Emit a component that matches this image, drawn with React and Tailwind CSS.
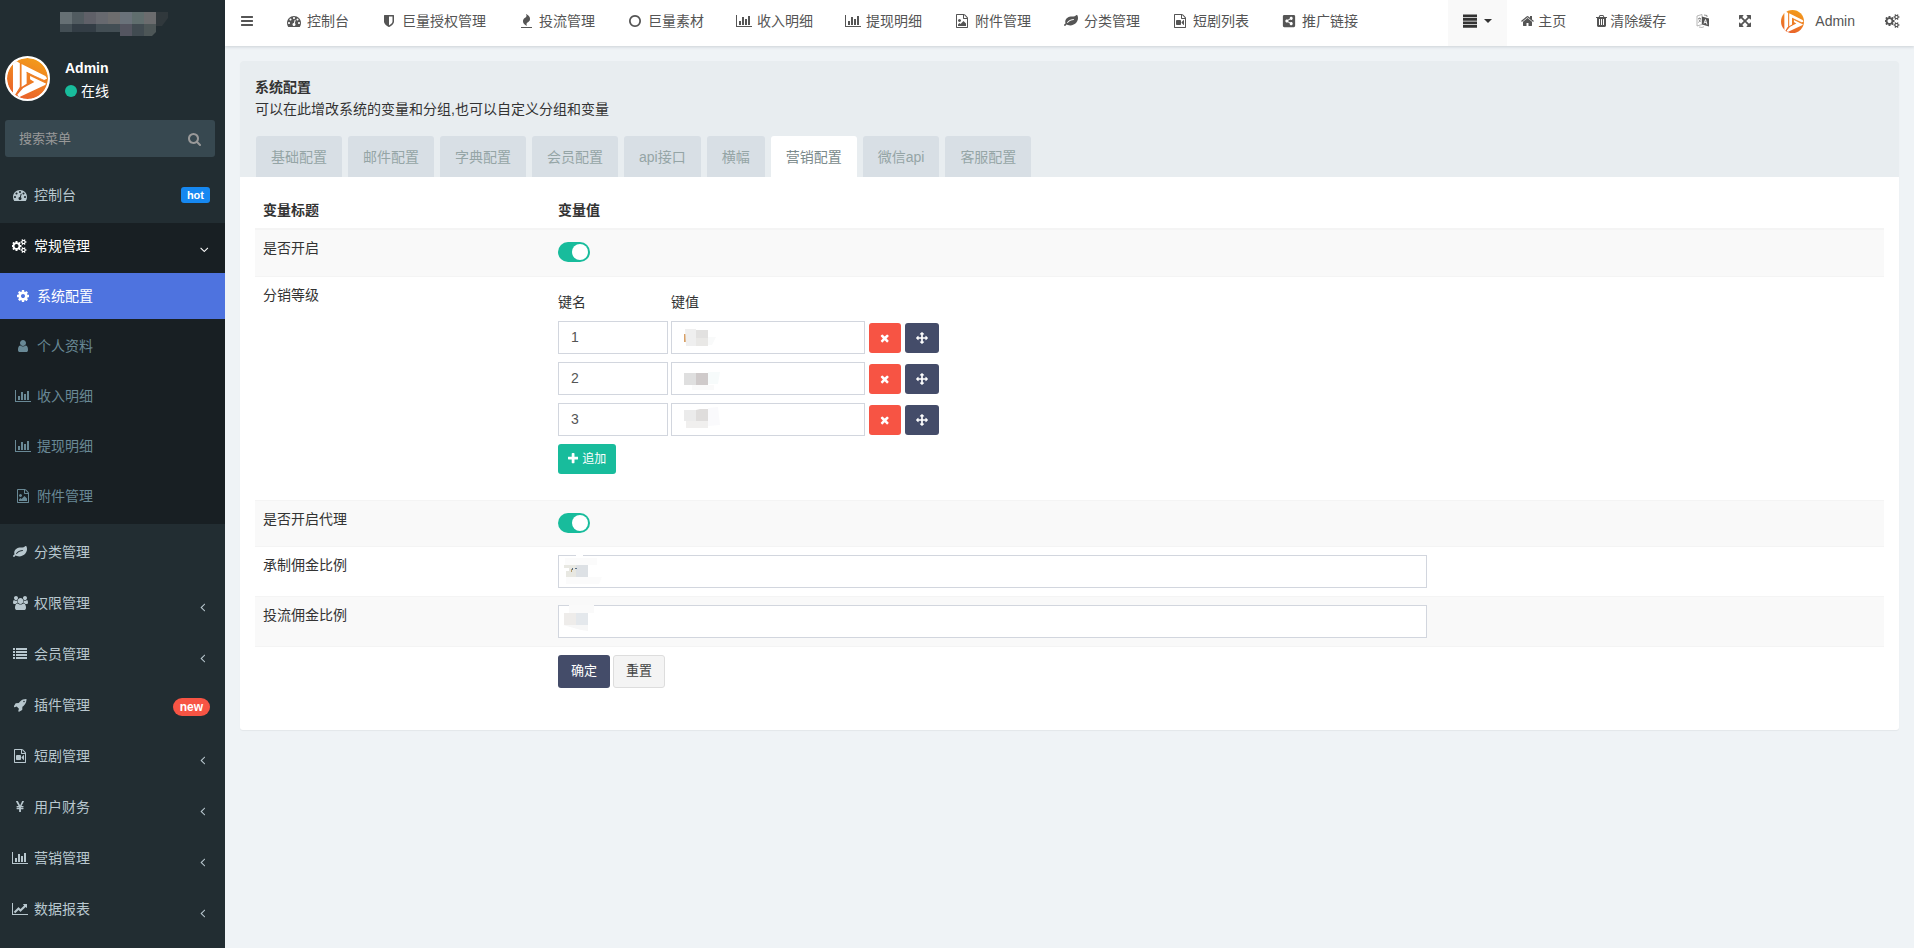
import { useState } from 'react'
import { FaShareAltSquare } from 'react-icons/fa'

/* ── Icon shapes, on a 1792-unit tall grid ── */
const FILE_FRAME =
  'M1468 380q28 28 48 76t20 88v1152q0 40-28 68t-68 28h-1344q-40 0-68-28t-28-68v-1600q0-40 28-68t68-28h896q40 0 88 20t76 48zm-444-244v376h376q-10-29-22-41l-313-313q-12-12-41-22zm384 1528v-1024h-416q-40 0-68-28t-28-68v-416h-768v1536h1280z'

const ICONS = {
  bars: ['128 0 1536 1792', 'M1664 1344v128q0 26-19 45t-45 19h-1408q-26 0-45-19t-19-45v-128q0-26 19-45t45-19h1408q26 0 45 19t19 45zm0-512v128q0 26-19 45t-45 19h-1408q-26 0-45-19t-19-45v-128q0-26 19-45t45-19h1408q26 0 45 19t19 45zm0-512v128q0 26-19 45t-45 19h-1408q-26 0-45-19t-19-45v-128q0-26 19-45t45-19h1408q26 0 45 19t19 45z'],
  dashboard: ['0 0 1792 1792', 'M384 1152q0-53-37.5-90.5t-90.5-37.5-90.5 37.5-37.5 90.5 37.5 90.5 90.5 37.5 90.5-37.5 37.5-90.5zm192-448q0-53-37.5-90.5t-90.5-37.5-90.5 37.5-37.5 90.5 37.5 90.5 90.5 37.5 90.5-37.5 37.5-90.5zm428 481l101-382q6-26-7.5-48.5t-38.5-29.5-48 6.5-30 39.5l-101 382q-60 5-107 43.5t-63 98.5q-20 77 20 146t117 89 146-20 89-117q16-60-6-117t-72-91zm660-33q0-53-37.5-90.5t-90.5-37.5-90.5 37.5-37.5 90.5 37.5 90.5 90.5 37.5 90.5-37.5 37.5-90.5zm-640-640q0-53-37.5-90.5t-90.5-37.5-90.5 37.5-37.5 90.5 37.5 90.5 90.5 37.5 90.5-37.5 37.5-90.5zm448 192q0-53-37.5-90.5t-90.5-37.5-90.5 37.5-37.5 90.5 37.5 90.5 90.5 37.5 90.5-37.5 37.5-90.5zm320 448q0 261-141 483-19 29-54 29h-1402q-35 0-54-29-141-221-141-483 0-182 71-348t191-286 286-191 348-71 348 71 286 191 191 286 71 348z'],
  cog: ['128 0 1536 1792', 'M1152 896q0-106-75-181t-181-75-181 75-75 181 75 181 181 75 181-75 75-181zm512-109v222q0 12-8 23t-20 13l-185 28q-19 54-39 91 35 50 107 138 10 12 10 25t-9 23q-27 37-99 108t-94 71q-12 0-26-9l-138-108q-44 23-91 38-16 136-29 186-7 28-36 28h-222q-14 0-24.5-8.5t-11.5-21.5l-28-184q-49-16-90-37l-141 107q-10 9-25 9-14 0-25-11-126-114-165-168-7-10-7-23 0-12 8-23 15-21 51-66.5t54-70.5q-27-50-41-99l-183-27q-13-2-21-12.5t-8-23.5v-222q0-12 8-23t19-13l186-28q14-46 39-92-40-57-107-138-10-12-10-24 0-10 9-23 26-36 98.5-107.5t94.5-71.5q13 0 26 10l138 107q44-23 91-38 16-136 29-186 7-28 36-28h222q14 0 24.5 8.5t11.5 21.5l28 184q49 16 90 37l142-107q9-9 24-9 13 0 25 10 129 119 165 170 7 8 7 22 0 12-8 23-15 21-51 66.5t-54 70.5q26 50 41 98l183 28q13 2 21 12.5t8 23.5z'],
  cogs: ['0 0 1920 1792', 'M832 896q0-106-75-181t-181-75-181 75-75 181 75 181 181 75 181-75 75-181zm768 512q0-52-38-90t-90-38-90 38-38 90q0 53 37.5 90.5t90.5 37.5 90.5-37.5 37.5-90.5zm0-1024q0-52-38-90t-90-38-90 38-38 90q0 53 37.5 90.5t90.5 37.5 90.5-37.5 37.5-90.5zm-384 421v185q0 10-7 19.5t-16 10.5l-155 24q-11 35-32 76 34 48 90 115 7 11 7 20 0 12-7 19-23 30-82.5 89.5t-78.5 59.5q-11 0-21-7l-115-90q-37 19-77 31-11 108-23 155-7 24-30 24h-186q-11 0-20-7.5t-10-17.5l-23-153q-34-10-75-31l-118 89q-7 7-20 7-11 0-21-8-144-133-144-160 0-9 7-19 10-14 41-53t47-61q-23-44-35-82l-152-24q-10-1-17-9.5t-7-19.5v-185q0-10 7-19.5t16-10.5l155-24q11-35 32-76-34-48-90-115-7-11-7-20 0-12 7-20 22-30 82-89t79-59q11 0 21 7l115 90q34-18 77-32 11-108 23-154 7-24 30-24h186q11 0 20 7.5t10 17.5l23 153q34 10 75 31l118-89q8-7 20-7 11 0 21 8 144 133 144 160 0 8-7 19-12 16-42 54t-45 60q23 48 34 82l152 23q10 2 17 10.5t7 19.5zm640 533v140q0 16-149 31-12 27-30 52 51 113 51 138 0 4-4 7-122 71-124 71-8 0-46-47t-52-68q-20 2-30 2t-30-2q-14 21-52 68t-46 47q-2 0-124-71-4-3-4-7 0-25 51-138-18-25-30-52-149-15-149-31v-140q0-16 149-31 13-29 30-52-51-113-51-138 0-4 4-7 4-2 35-20t59-34 30-16q8 0 46 46.5t52 67.5q20-2 30-2t30 2q51-71 92-112l6-2q4 0 124 70 4 3 4 7 0 25-51 138 17 23 30 52 149 15 149 31zm0-1024v140q0 16-149 31-12 27-30 52 51 113 51 138 0 4-4 7-122 71-124 71-8 0-46-47t-52-68q-20 2-30 2t-30-2q-14 21-52 68t-46 47q-2 0-124-71-4-3-4-7 0-25 51-138-18-25-30-52-149-15-149-31v-140q0-16 149-31 13-29 30-52-51-113-51-138 0-4 4-7 4-2 35-20t59-34 30-16q8 0 46 46.5t52 67.5q20-2 30-2t30 2q51-71 92-112l6-2q4 0 124 70 4 3 4 7 0 25-51 138 17 23 30 52 149 15 149 31z'],
  leaf: ['0 0 1792 1792', 'M1280 704q0-26-19-45t-45-19q-172 0-318 49.5t-259.5 134-235.5 219.5q-19 21-19 45 0 26 19 45t45 19q24 0 45-19 27-24 74-71t67-66q137-124 268.5-176t313.5-52q26 0 45-19t19-45zm512-198q0 95-20 193-46 224-184.5 383t-357.5 268q-214 108-438 108-148 0-286-47-15-5-88-42t-96-37q-16 0-39.5 32t-45 70-52.5 70-60 32q-43 0-63.5-17.5t-45.5-59.5q-2-4-6-11t-5.5-10-3-9.5-1.5-13.5q0-35 31-73.5t68-65.5 68-56 31-48q0-4-14-38t-16-44q-9-51-9-104 0-115 43.5-220t119-184.5 170.5-139 204-95.5q55-18 145-25.5t179.5-9 178.5-6 163.5-24 113.5-56.5l29.5-29.5 29.5-28 27-20 36.5-16 43.5-4.5q39 0 70.5 46t47.5 112 24 124 8 96z'],
  barChart: ['0 0 2048 1792', 'M640 896v512h-256v-512h256zm384-512v1024h-256v-1024h256zm1024 1152v128h-2048v-1536h128v1408h1920zm-640-896v768h-256v-768h256zm384-384v1152h-256v-1152h256z'],
  lineChart: ['0 0 2048 1792', 'M2048 1536v128h-2048v-1536h128v1408h1920zm-128-1248v435q0 21-19.5 29.5t-35.5-7.5l-121-121-633 633q-10 10-23 10t-23-10l-233-233-416 416-192-192 585-585q10-10 23-10t23 10l233 233 464-464-121-121q-16-16-7.5-35.5t29.5-19.5h435q14 0 23 9t9 23z'],
  fileImage: ['0 0 1536 1792', FILE_FRAME + 'm-128-448v320h-1024v-192l192-192 128 128 384-384zm-832-192q-80 0-136-56t-56-136 56-136 136-56 136 56 56 136-56 136-136 56z'],
  fileVideo: ['0 0 1536 1792', FILE_FRAME + 'M768 768q52 0 90 38t38 90v384q0 52-38 90t-90 38h-384q-52 0-90-38t-38-90v-384q0-52 38-90t90-38h384zm492 2q20 8 20 30v576q0 22-20 30-8 2-12 2-14 0-23-9l-265-266v-90l265-266q9-9 23-9 4 0 12 2z'],
  shield: ['256 0 1280 1792', 'M1344 960v-640h-448v1137q119-63 213-137 235-184 235-360zm192-768v768q0 86-33.5 170.5t-83 150-118 127.5-126.5 103-121 77.5-89.5 49.5-42.5 20q-12 6-26 6t-26-6q-16-7-42.5-20t-89.5-49.5-121-77.5-126.5-103-118-127.5-83-150-33.5-170.5v-768q0-26 19-45t45-19h1152q26 0 45 19t19 45z'],
  fire: ['192 0 1408 1792', 'M1600 1696v64q0 13-9.5 22.5t-22.5 9.5h-1344q-13 0-22.5-9.5t-9.5-22.5v-64q0-13 9.5-22.5t22.5-9.5h1344q13 0 22.5 9.5t9.5 22.5zm-256-1056q0 78-24.5 144t-64 112.5-87.5 88-96 77.5-87.5 72-64 81.5-24.5 96.5q0 96 67 224l-4-1 1 1q-90-41-160-83t-138.5-100-113.5-122.5-72.5-150.5-27.5-184q0-78 24.5-144t64-112.5 87.5-88 96-77.5 87.5-72 64-81.5 24.5-96.5q0-94-66-224l3 1-1-1q90 41 160 83t138.5 100 113.5 122.5 72.5 150.5 27.5 184z'],
  circle: ['128 0 1536 1792', 'M896 352q-148 0-273 73t-198 198-73 273 73 273 198 198 273 73 273-73 198-198 73-273-73-273-198-198-273-73zm768 544q0 209-103 385.5t-279.5 279.5-385.5 103-385.5-103-279.5-279.5-103-385.5 103-385.5 279.5-279.5 385.5-103 385.5 103 279.5 279.5 103 385.5z'],
  user: ['256 0 1280 1792', 'M1536 1399q0 109-62.5 187t-150.5 78h-854q-88 0-150.5-78t-62.5-187q0-85 8.5-160.5t31.5-152 58.5-131 94-89 134.5-34.5q131 128 313 128t313-128q76 0 134.5 34.5t94 89 58.5 131 31.5 152 8.500 160.500zm-256-887q0 159-112.5 271.5t-271.5 112.5-271.5-112.5-112.5-271.5 112.5-271.5 271.5-112.5 271.5 112.5 112.5 271.5z'],
  users: ['0 0 1920 1792', 'M593 896q-162 5-265 128h-134q-82 0-138-40.5t-56-118.5q0-353 124-353 6 0 43.5 21t97.5 42.5 119 21.5q67 0 133-23-5 37-5 66 0 159 81 256zm1071 637q0 120-73 189.5t-194 69.5h-874q-121 0-194-69.5t-73-189.5q0-53 3.5-103.5t14-109 26.5-108.5 43-97.5 62-81 85.5-53.5 111.5-20q10 0 43 21.5t73 48 107 48 135 21.5 135-21.5 107-48 73-48 43-21.5q61 0 111.5 20t85.5 53.5 62 81 43 97.5 26.5 108.5 14 109 3.5 103.5zm-1024-1277q0 106-75 181t-181 75-181-75-75-181 75-181 181-75 181 75 75 181zm704 384q0 159-112.5 271.5t-271.5 112.5-271.5-112.5-112.5-271.5 112.5-271.5 271.5-112.5 271.5 112.5 112.5 271.5zm576 225q0 78-56 118.5t-138 40.5h-134q-103-123-265-128 81-97 81-256 0-29-5-66 66 23 133 23 59 0 119-21.5t97.5-42.5 43.5-21q124 0 124 353zm-128-609q0 106-75 181t-181 75-181-75-75-181 75-181 181-75 181 75 75 181z'],
  list: ['0 0 1792 1792', 'M0 1280h256v256h-256zM0 896h256v256h-256zM0 512h256v256h-256zM0 128h256v256h-256zM384 1280h1408v256h-1408zM384 896h1408v256h-1408zM384 512h1408v256h-1408zM384 128h1408v256h-1408z'],
  alignJustify: ['0 0 1792 1792', 'M0 1408h1792v352h-1792zM0 960h1792v352h-1792zM0 512h1792v352h-1792zM0 64h1792v352h-1792z'],
  rocket: ['64 0 1664 1792', 'M1440 448q0-40-28-68t-68-28-68 28-28 68 28 68 68 28 68-28 28-68zm224-288q0 249-75.5 430.5t-253.5 360.5q-81 80-195 176l-20 379q-2 16-16 26l-384 224q-7 4-16 4-12 0-23-9l-64-64q-13-14-8-32l85-276-281-281-276 85q-3 1-9 1-14 0-23-9l-64-64q-17-19-5-39l224-384q10-14 26-16l379-20q96-114 176-195 188-187 358-258t431-71q14 0 24 9.5t10 22.5z'],
  yen: ['384 0 1024 1792', 'M985.5 1536h-172q-13 0-22.5-9t-9.5-23v-330h-288q-13 0-22.5-9t-9.5-23v-103q0-13 9.5-22.5t22.5-9.5h288v-85h-288q-13 0-22.5-9t-9.5-23v-104q0-13 9.5-22.5t22.5-9.5h214l-321-578q-8-16 0-32 10-16 28-16h194q19 0 29 18l215 425q19 38 56 125 10-24 30.5-68t27.5-61l191-420q8-19 29-19h191q17 0 27 16 9 14 1 31l-313 579h215q13 0 22.5 9.5t9.5 22.5v104q0 14-9.5 23t-22.5 9h-290v85h290q13 0 22.5 9.5t9.5 22.5v103q0 14-9.5 23t-22.5 9h-290v330q0 13-9.5 22.5t-22.5 9.5z'],
  search: ['64 0 1664 1792', 'M1216 832q0-185-131.5-316.5t-316.5-131.5-316.5 131.5-131.5 316.5 131.5 316.5 316.5 131.5 316.5-131.5 131.5-316.5zm512 832q0 52-38 90t-90 38q-54 0-90-38l-343-342q-179 124-399 124-143 0-273.5-55.5t-225-150-150-225-55.5-273.5 55.5-273.5 150-225 225-150 273.5-55.5 273.5 55.5 225 150 150 225 55.5 273.5q0 220-124 399l343 343q37 37 37 90z'],
  home: ['64 0 1664 1792', 'M1472 992v480q0 26-19 45t-45 19h-384v-384h-256v384h-384q-26 0-45-19t-19-45v-480q0-1 .5-3t.5-3l575-474 575 474q1 2 1 6zm223-69l-62 74q-8 9-21 11h-3q-13 0-21-7l-692-577-692 577q-12 8-24 7-13-2-21-11l-62-74q-8-10-7-23.5t11-21.5l719-599q32-26 76-26t76 26l244 204v-195q0-14 9-23t23-9h192q14 0 23 9t9 23v408l219 182q10 8 11 21.5t-7 23.5z'],
  trash: ['192 0 1408 1792', 'M704 1376v-704q0-14-9-23t-23-9h-64q-14 0-23 9t-9 23v704q0 14 9 23t23 9h64q14 0 23-9t9-23zm256 0v-704q0-14-9-23t-23-9h-64q-14 0-23 9t-9 23v704q0 14 9 23t23 9h64q14 0 23-9t9-23zm256 0v-704q0-14-9-23t-23-9h-64q-14 0-23 9t-9 23v704q0 14 9 23t23 9h64q14 0 23-9t9-23zm-544-992h448l-48-117q-7-9-17-11h-317q-10 2-17 11zm928 32v64q0 14-9 23t-23 9h-96v948q0 83-47 143.5t-113 60.5h-832q-66 0-113-58.5t-47-141.5v-952h-96q-14 0-23-9t-9-23v-64q0-14 9-23t23-9h309l70-167q15-37 54-63t79-26h320q40 0 79 26t54 63l70 167h309q14 0 23 9t9 23z'],
  expand: ['128 0 1536 1792', 'M1411 541l-355 355 355 355 144-144q29-31 70-14 39 17 39 59v448q0 26-19 45t-45 19h-448q-42 0-59-40-17-39 14-69l144-144-355-355-355 355 144 144q31 30 14 69-17 40-59 40h-448q-26 0-45-19t-19-45v-448q0-42 40-59 39-17 69 14l144 144 355-355-355-355-144 144q-19 19-45 19-12 0-24-5-40-17-40-59v-448q0-26 19-45t45-19h448q42 0 59 40 17 39-14 69l-144 144 355 355 355-355-144-144q-31-30-14-69 17-40 59-40h448q26 0 45 19t19 45v448q0 42-39 59-13 5-25 5-26 0-45-19z'],
  arrows: ['0 0 1792 1792', 'M1792 896q0 26-19 45l-256 256q-19 19-45 19t-45-19-19-45v-128h-384v384h128q26 0 45 19t19 45-19 45l-256 256q-19 19-45 19t-45-19l-256-256q-19-19-19-45t19-45 45-19h128v-384h-384v128q0 26-19 45t-45 19-45-19l-256-256q-19-19-19-45t19-45l256-256q19-19 45-19t45 19 19 45v128h384v-384h-128q-26 0-45-19t-19-45 19-45l256-256q19-19 45-19t45 19l256 256q19 19 19 45t-19 45-45 19h-128v384h384v-128q0-26 19-45t45-19 45 19l256 256q19 19 19 45z'],
  times: ['192 0 1408 1792', 'M1490 1322q0 40-28 68l-136 136q-28 28-68 28t-68-28l-294-294-294 294q-28 28-68 28t-68-28l-136-136q-28-28-28-68t28-68l294-294-294-294q-28-28-28-68t28-68l136-136q28-28 68-28t68 28l294 294 294-294q28-28 68-28t68 28l136 136q28 28 28 68t-28 68l-294 294 294 294q28 28 28 68z'],
  plus: ['192 0 1408 1792', 'M1600 736v192q0 40-28 68t-68 28h-416v416q0 40-28 68t-68 28h-192q-40 0-68-28t-28-68v-416h-416q-40 0-68-28t-28-68v-192q0-40 28-68t68-28h416v-416q0-40 28-68t68-28h192q40 0 68 28t28 68v416h416q40 0 68 28t28 68z'],
  angleLeft: ['544 0 704 1792', 'M1203 544q0 13-10 23l-393 393 393 393q10 10 10 23t-10 23l-50 50q-10 10-23 10t-23-10l-466-466q-10-10-10-23t10-23l466-466q10-10 23-10t23 10l50 50q10 10 10 23z'],
}

function Icon({ name, className = 'h-[14px]' }) {
  if (name === 'share') return <FaShareAltSquare className={`${className} w-auto`} />
  const [viewBox, d] = ICONS[name]
  return (
    <svg viewBox={viewBox} className={`${className} w-auto shrink-0 fill-current`} aria-hidden="true">
      <path d={d} />
    </svg>
  )
}

function Logo({ className }) {
  return (
    <svg viewBox="0 0 48 48" className={className} aria-hidden="true">
      <defs>
        <linearGradient id="disc" x1="0.7" y1="0" x2="0.3" y2="1">
          <stop offset="0" stopColor="#f39c1a" />
          <stop offset="1" stopColor="#e9602c" />
        </linearGradient>
      </defs>
      <circle cx="24" cy="24" r="24" fill="url(#disc)" />
      <path d="M7 5l3-2 5 3v28L9 44l-2-2z" fill="#fff" />
      <path d="M17 7l28 14 2 3-4 2-11-5-9-5v14l-6 4z" fill="#fff" />
      <path d="M12 43l7-8 13-7-5-3v-4l19 9-2 2-30 14z" fill="#fff" />
      <path d="M16 6v28l-6 10M23 17l22 10" stroke="#ee7d27" strokeWidth="1" fill="none" />
    </svg>
  )
}

function LanguageIcon() {
  return (
    <svg viewBox="0 0 14 14" className="h-[14px] w-[14px]" aria-hidden="true">
      <path d="M1 2l5-1.500v10L1 12z" fill="#fff" stroke="#999" strokeWidth="0.700" />
      <path d="M2 4.500h3M3.500 3.500v1M2.300 8.500c1.200-.8 2-2 2.200-4M2.600 5.500l2 2.500" stroke="#777" strokeWidth="0.700" fill="none" />
      <path d="M6 2.500l7 2v8l-7-2z" fill="#555" />
      <path d="M8 9.500l1.500-4 1.500 5M8.500 8.200l2 .5" stroke="#fff" strokeWidth="0.900" fill="none" />
      <path d="M8 1l3 .5v1.500" stroke="#777" strokeWidth="0.800" fill="none" />
      <path d="M3 13l3 .5 2-.8" stroke="#999" strokeWidth="0.700" fill="none" />
    </svg>
  )
}

/* ── Navigation data ── */
const SUBMENU = [
  { icon: 'cog', label: '系统配置', active: true },
  { icon: 'user', label: '个人资料' },
  { icon: 'barChart', label: '收入明细' },
  { icon: 'barChart', label: '提现明细' },
  { icon: 'fileImage', label: '附件管理' },
]

const MENU = [
  { icon: 'leaf', label: '分类管理' },
  { icon: 'users', label: '权限管理', arrow: true },
  { icon: 'list', label: '会员管理', arrow: true },
  { icon: 'rocket', label: '插件管理', badge: 'new' },
  { icon: 'fileVideo', label: '短剧管理', arrow: true },
  { icon: 'yen', label: '用户财务', arrow: true },
  { icon: 'barChart', label: '营销管理', arrow: true },
  { icon: 'lineChart', label: '数据报表', arrow: true },
]

const TOP_NAV = [
  { icon: 'dashboard', label: '控制台' },
  { icon: 'shield', label: '巨量授权管理' },
  { icon: 'fire', label: '投流管理' },
  { icon: 'circle', label: '巨量素材' },
  { icon: 'barChart', label: '收入明细' },
  { icon: 'barChart', label: '提现明细' },
  { icon: 'fileImage', label: '附件管理' },
  { icon: 'leaf', label: '分类管理' },
  { icon: 'fileVideo', label: '短剧列表' },
  { icon: 'share', label: '推广链接' },
]

const TABS = ['基础配置', '邮件配置', '字典配置', '会员配置', 'api接口', '横幅', '营销配置', '微信api', '客服配置']

function MenuItem({ icon, label, arrow, badge }) {
  return (
    <li>
      <a href="#" className="flex h-[51px] items-center pr-[15px] pl-3 text-[#b8c7ce]">
        <span className="flex w-4 justify-center">
          <Icon name={icon} />
        </span>
        <span className="ml-[6px]">{label}</span>
        {arrow && (
          <span className="mt-2 mr-[5px] ml-auto">
            <Icon name="angleLeft" />
          </span>
        )}
        {badge === 'new' && (
          <span className="mt-1 ml-auto rounded-full bg-[#f75444] px-[7px] text-xs leading-[18px] font-bold text-white">new</span>
        )}
        {badge === 'hot' && (
          <span className="ml-auto rounded-[3px] bg-[#1688f1] px-[6px] text-[11px] leading-4 font-bold text-white">hot</span>
        )}
      </a>
    </li>
  )
}

function Sidebar() {
  return (
    <aside className="flex w-[225px] shrink-0 flex-col bg-[#222d32]">
      {/* Obscured site name */}
      <div className="flex h-[50px] items-start pt-3 pl-[60px]">
        <svg viewBox="0 0 108 30" className="h-[30px] w-[108px]" aria-hidden="true">
          <path fill="#667074" d="M0 0h12v12H0z" />
          <path fill="#515b60" d="M12 0h12v12H12z" />
          <path fill="#5f6068" d="M24 0h12v12H24z" />
          <path fill="#67696f" d="M36 0h12v12H36z" />
          <path fill="#6d6d6e" d="M48 0h12v12H48z" />
          <path fill="#6a727a" d="M60 0h12v12H60z" />
          <path fill="#606e6e" d="M72 0h12v12H72z" />
          <path fill="#6b6c6e" d="M84 0h12v12H84z" />
          <path fill="#30383c" d="M96 0h12v6l-6 8H96z" />
          <path fill="#434e54" d="M0 12h12v8H0zM36 12h24v8H36z" />
          <path fill="#333d45" d="M12 12h24v8H12z" />
          <path fill="#545560" d="M60 12h12v12H60z" />
          <path fill="#414b51" d="M72 12h12v12H72z" />
          <path fill="#4d5657" d="M84 12h12v8l-4 4h-8z" />
        </svg>
      </div>

      <div className="flex items-center gap-[15px] px-[5px] pt-[6px]">
        <Logo className="h-[45px] w-[45px] rounded-full border-2 border-white bg-white" />
        <div className="pt-[2px] text-white">
          <p className="leading-5 font-bold">Admin</p>
          <p className="mt-[3px] flex items-center gap-1 leading-5">
            <span className="h-3 w-3 rounded-full bg-[#18bc9c]" />
            在线
          </p>
        </div>
      </div>

      <form className="mt-[19px] mr-[10px] ml-[5px] flex h-[37px] items-center rounded-[3px] bg-[#374850] pr-[14px] pl-[14px]">
        <input
          type="text"
          aria-label="搜索菜单"
          placeholder="搜索菜单"
          className="min-w-0 flex-1 text-[13px] text-white outline-none placeholder:text-[#999]"
        />
        <button type="submit" aria-label="搜索" className="text-[#999]">
          <Icon name="search" />
        </button>
      </form>

      <ul className="mt-3">
        <MenuItem icon="dashboard" label="控制台" badge="hot" />
        <li className="mt-[3px] bg-[#181f23] pb-[3px]">
          <a href="#" className="flex h-[50px] items-center pr-[19px] pb-1 pl-3 text-white">
            <Icon name="cogs" />
            <span className="ml-[7px]">常规管理</span>
            <span className="mt-2 ml-auto -rotate-90">
              <Icon name="angleLeft" />
            </span>
          </a>
          <ul>
            {SUBMENU.map(({ icon, label, active }, i) => (
              <li key={i} className={active ? 'mb-[2px] bg-[#4e73df] text-white' : 'text-[#698996]'}>
                <a href="#" className={active ? 'flex h-[46px] items-center pl-[15px]' : 'flex h-[50px] items-center pl-[15px]'}>
                  <span className="flex w-4 justify-center">
                    <Icon name={icon} />
                  </span>
                  <span className="ml-[6px]">{label}</span>
                </a>
              </li>
            ))}
          </ul>
        </li>
        <li aria-hidden="true" className="h-[2px]" />
        {MENU.map((item) => (
          <MenuItem key={item.label} {...item} />
        ))}
      </ul>
    </aside>
  )
}

function TopBar() {
  return (
    <header className="flex h-[46px] items-center bg-white pb-1 text-[#555] shadow-[0_1px_3px_rgba(0,21,41,0.15)]">
      <button type="button" aria-label="切换菜单" className="ml-4">
        <Icon name="bars" />
      </button>
      <nav className="ml-[17px] flex gap-[1px]">
        {TOP_NAV.map(({ icon, label }) => (
          <a key={label} href="#" className="flex items-center gap-1 px-[15px]">
            <span className="flex w-[18px] justify-center">
              <Icon name={icon} />
            </span>
            {label}
          </a>
        ))}
      </nav>

      <div className="ml-auto flex items-center">
        <button type="button" aria-label="更多" className="-mb-1 flex h-[46px] items-center gap-[7px] bg-[#f9f9f9] px-[15px] pb-1 text-[#333]">
          <Icon name="alignJustify" />
          <svg viewBox="0 0 8 4" className="h-1 w-2 fill-current" aria-hidden="true">
            <path d="M0 0h8L4 4z" />
          </svg>
        </button>
        <a href="#" className="ml-[14px] flex items-center gap-1">
          <Icon name="home" />
          主页
        </a>
        <a href="#" className="ml-[30px] flex items-center gap-[3px]">
          <Icon name="trash" />
          清除缓存
        </a>
        <button type="button" aria-label="语言" className="ml-[30px]">
          <LanguageIcon />
        </button>
        <button type="button" aria-label="全屏" className="ml-[29px]">
          <Icon name="expand" />
        </button>
        <a href="#" className="ml-[30px] flex items-center gap-[11px]">
          <Logo className="h-[23px] w-[23px]" />
          Admin
        </a>
        <button type="button" aria-label="设置" className="mr-[14px] ml-[30px]">
          <Icon name="cogs" />
        </button>
      </div>
    </header>
  )
}

function Toggle({ id }) {
  const [on, setOn] = useState(true)
  return (
    <input
      id={id}
      type="checkbox"
      role="switch"
      checked={on}
      onChange={() => setOn(!on)}
      className="relative block h-5 w-8 appearance-none rounded-full bg-gray-300 before:absolute before:top-[2px] before:left-[2px] before:h-4 before:w-4 before:rounded-full before:bg-white checked:bg-[#18bc9c] checked:before:left-[14px]"
    />
  )
}

/* Pale mosaic over a stored value, as [colour, path] pairs */
function Mosaic({ shapes, className }) {
  return (
    <svg viewBox="0 0 46 30" className={`pointer-events-none absolute h-[30px] w-[46px] ${className}`} aria-hidden="true">
      {shapes.map(([fill, d]) => (
        <path key={d} fill={fill} d={d} />
      ))}
    </svg>
  )
}

const LEVELS = [
  {
    key: '1',
    shapes: [
      ['#d9a066', 'M1 9h2v8H1z'],
      ['#efefef', 'M2 4h11v17H3z'],
      ['#e2e1e0', 'M13 5h12v8H13z'],
      ['#e9e8e6', 'M13 13h12v8H13z'],
      ['#f9fafa', 'M25 12h8l-4 8h-4z'],
    ],
  },
  {
    key: '2',
    shapes: [
      ['#dfdfdf', 'M1 7h12v12H1z'],
      ['#cfcaca', 'M13 7h12v12H13z'],
      ['#f7fbfb', 'M25 6h12l-2 12H25z'],
      ['#fafafa', 'M9 19h22v5H9z'],
    ],
  },
  {
    key: '3',
    shapes: [
      ['#ebebeb', 'M1 3h12v11H1z'],
      ['#dfdddc', 'M13 3l4-1h8v12H13z'],
      ['#f0efee', 'M3 14h22v7H3z'],
      ['#fafafc', 'M25 1l10-1 2 18-12 1z'],
    ],
  },
]

const MAKE_SHAPES = [
  ['#fff', 'M18 0h7v1h-7z'],
  ['#fbfbfb', 'M7 3h32v7H7zM8 22h36l-3 7H8z'],
  ['#e8e8e2', 'M6 10h12v12H8v-6h3v-3H6z'],
  ['#dde1e5', 'M18 10h12v12H18z'],
  ['#b59a6a', 'M13 14h1v3h-1z'],
  ['#5c7186', 'M14 13h1v2h-1zM17 13h2v1h-2z'],
]

const FLOW_SHAPES = [
  ['#fafafa', 'M11 0h25v8H11z'],
  ['#eeecea', 'M6 8h12v12H6z'],
  ['#e4e8ec', 'M18 8h12v12H18z'],
  ['#f7f7f7', 'M5 20h25v6l-7-1z'],
]

function LevelEditor() {
  return (
    <div className="pt-[7px] pb-[18px]">
      <div className="flex h-[29px] items-start gap-[3px]">
        <span className="w-[110px]">键名</span>
        <span>键值</span>
      </div>
      <div className="flex flex-col gap-2">
        {LEVELS.map(({ key, shapes }) => (
          <div key={key} className="flex items-center gap-1">
            <div className="flex gap-[3px]">
              <input
                type="text"
                aria-label="键名"
                defaultValue={key}
                className="h-[33px] w-[110px] border border-[#d2d6de] bg-white px-3 text-[#555]"
              />
              <div className="relative">
                <input type="text" aria-label="键值" className="block h-[33px] w-[194px] border border-[#d2d6de] bg-white px-3 text-[#555]" />
                <Mosaic shapes={shapes} className="top-1 left-3" />
              </div>
            </div>
            <button type="button" aria-label="删除" className="mt-[2px] flex h-[30px] w-8 items-center justify-center rounded-[3px] bg-[#f75444] text-white">
              <Icon name="times" className="h-3" />
            </button>
            <button type="button" aria-label="移动" className="mt-[2px] flex h-[30px] w-[34px] items-center justify-center rounded-[3px] bg-[#444c69] text-white">
              <Icon name="arrows" className="h-3" />
            </button>
          </div>
        ))}
      </div>
      <button type="button" className="mt-2 flex h-[30px] items-center gap-1 rounded-[3px] bg-[#18bc9c] px-[10px] text-[12px] text-white">
        <Icon name="plus" className="h-[13px]" />
        追加
      </button>
    </div>
  )
}

function ConfigTable() {
  const labelCell = 'w-[295px] p-2 text-left align-top'
  const row = 'border-t border-[#f4f4f4]'
  const field = 'block h-[33px] w-full border border-[#d2d6de] bg-white px-3'
  return (
    <table className="w-full border-collapse">
      <thead>
        <tr className="h-9">
          <th className={labelCell}>变量标题</th>
          <th className="p-2 text-left">变量值</th>
        </tr>
      </thead>
      <tbody>
        <tr className="border-t-2 border-[#f4f4f4] bg-[#f9f9f9]">
          <td className={labelCell}><label htmlFor="enable">是否开启</label></td>
          <td className="h-[47px] px-2 pt-3 align-top"><Toggle id="enable" /></td>
        </tr>
        <tr className={row}>
          <td className={labelCell}>分销等级</td>
          <td className="p-2"><LevelEditor /></td>
        </tr>
        <tr className={`${row} bg-[#f9f9f9]`}>
          <td className={labelCell}><label htmlFor="agent">是否开启代理</label></td>
          <td className="h-[46px] px-2 pt-3 align-top"><Toggle id="agent" /></td>
        </tr>
        <tr className={row}>
          <td className={labelCell}><label htmlFor="make">承制佣金比例</label></td>
          <td className="p-2">
            <div className="relative w-2/3 pr-[10px]">
              <input id="make" type="text" className={field} />
              <Mosaic shapes={MAKE_SHAPES} className="top-0 left-0" />
            </div>
          </td>
        </tr>
        <tr className={`${row} bg-[#f9f9f9]`}>
          <td className={labelCell}><label htmlFor="flow">投流佣金比例</label></td>
          <td className="p-2">
            <div className="relative w-2/3 pr-[10px]">
              <input id="flow" type="text" className={field} />
              <Mosaic shapes={FLOW_SHAPES} className="top-0 left-0" />
            </div>
          </td>
        </tr>
        <tr className={row}>
          <td className={labelCell} />
          <td className="p-2">
            <div className="flex gap-[3px] text-[13px]">
              <button type="submit" className="h-[33px] w-[52px] rounded-[3px] bg-[#444c69] text-white">确定</button>
              <button type="reset" className="h-[33px] w-[52px] rounded-[3px] border border-[#ddd] bg-[#f4f4f4] text-[#444]">重置</button>
            </div>
          </td>
        </tr>
      </tbody>
    </table>
  )
}

export default function App() {
  const [tab, setTab] = useState('营销配置')

  return (
    <div className="flex min-h-screen bg-[#eff3f6] font-['Liberation_Sans','Noto_Sans_CJK_SC',sans-serif] text-[14px] leading-5 text-[#333]">
      <Sidebar />
      <div className="flex min-w-0 flex-1 flex-col">
        <TopBar />
        <main className="px-[15px] pt-[15px] pb-[15px]">
          <section className="rounded-[3px] bg-white shadow-[0_1px_1px_rgba(0,0,0,0.05)]">
            {/* Heading and tabs */}
            <div className="rounded-t-[3px] bg-[#e8edf0] px-[15px] pt-[15px]">
              <h1 className="leading-[22px] font-bold">系统配置</h1>
              <p className="leading-[22px]">可以在此增改系统的变量和分组,也可以自定义分组和变量</p>
              <div role="tablist" className="mt-4 ml-[1px] flex gap-[6px]">
                {TABS.map((name) => (
                  <button
                    key={name}
                    type="button"
                    role="tab"
                    aria-selected={name === tab}
                    onClick={() => setTab(name)}
                    className={
                      name === tab
                        ? 'h-[41px] rounded-t-[3px] bg-white px-[15px] text-[#7b8a8b]'
                        : 'h-[41px] rounded-t-[3px] bg-[#d8dfe5] px-[15px] text-[#95a5a6]'
                    }
                  >
                    {name}
                  </button>
                ))}
              </div>
            </div>
            <form className="px-[15px] pt-[15px] pb-[34px]" onSubmit={(e) => e.preventDefault()}>
              <ConfigTable />
            </form>
          </section>
        </main>
      </div>
    </div>
  )
}
